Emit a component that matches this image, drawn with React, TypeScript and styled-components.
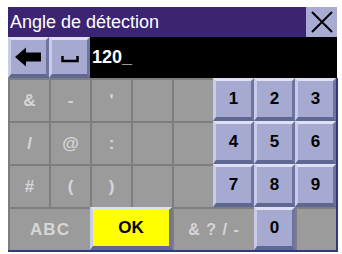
import React from "react";
import styled, { createGlobalStyle, css } from "styled-components";

const GlobalStyle = createGlobalStyle`
  html, body {
    margin: 0;
    padding: 0;
    background: #ffffff;
  }
  body {
    font-family: "Liberation Sans", Arial, sans-serif;
  }
`;

const Frame = styled.div`
  width: 330px;
  margin: 7px 0 0 8px;
  display: flex;
  flex-direction: column;
`;

const TitleBar = styled.div`
  display: flex;
  align-items: center;
  height: 30px;
  background: #3b2471;
  width: 329px;
`;

const Title = styled.div`
  flex: 1;
  color: #ffffff;
  font-size: 18px;
  padding-left: 2px;
  padding-top: 1px;
`;

const CloseButton = styled.div`
  width: 31px;
  height: 30px;
  background: #a9acd2;
  display: flex;
  align-items: center;
  justify-content: center;
`;

const bevel = css`
  box-sizing: border-box;
  border-style: solid;
  border-width: 3px 3px 4px 3px;
  border-color: #dfe1f3 #6c74a0 #5f6892 #c9cce8;
`;

const InputRow = styled.div`
  display: flex;
  height: 41px;
  width: 329px;
  background: #000000;
`;

const EditKey = styled.div`
  ${bevel};
  width: 41px;
  height: 41px;
  background: #a6aad0;
  display: flex;
  align-items: center;
  justify-content: center;
`;

const Field = styled.div`
  flex: 1;
  display: flex;
  align-items: center;
  padding-left: 2px;
  color: #ffffff;
  font-weight: bold;
  font-size: 18px;
`;

const Keypad = styled.div`
  display: grid;
  grid-template-columns: repeat(8, 41px);
  grid-template-rows: repeat(4, 43px);
  width: 330px;
  box-sizing: border-box;
  border-right: 2px solid #2e3b7e;
  border-bottom: 2px solid #2e3b7e;
  background: #9c9b9c;
`;

const GrayCell = styled.div<{ $span?: number; $size?: number }>`
  grid-column: span ${(p) => p.$span ?? 1};
  box-sizing: border-box;
  border-top: 2px solid #7e7e80;
  border-left: 2px solid #7e7e80;
  background: #9c9b9c;
  color: #d6d6d6;
  font-weight: bold;
  font-size: ${(p) => p.$size ?? 17}px;
  letter-spacing: ${(p) => ((p.$span ?? 1) > 1 ? 1 : 0)}px;
  display: flex;
  align-items: center;
  justify-content: center;
`;

const NumKey = styled.div<{ $yellow?: boolean; $span?: number }>`
  ${bevel};
  grid-column: span ${(p) => p.$span ?? 1};
  background: ${(p) => (p.$yellow ? "#ffff00" : "#a6aad0")};
  color: #000000;
  font-weight: bold;
  font-size: 17px;
  display: flex;
  align-items: center;
  justify-content: center;
`;

const symbols = [
  ["&", "-", "'", ""],
  ["/", "@", ":", ""],
  ["#", "(", ")", ""],
];
const digits = [
  ["1", "2", "3"],
  ["4", "5", "6"],
  ["7", "8", "9"],
];

const App: React.FC = () => {
  return (
    <>
      <GlobalStyle />
      <Frame>
        <TitleBar>
          <Title>Angle de détection</Title>
          <CloseButton>
            <svg width="24" height="24" viewBox="0 0 24 24">
              <path d="M2 2 L22 22 M22 2 L2 22" stroke="#000" strokeWidth="2" />
            </svg>
          </CloseButton>
        </TitleBar>
        <InputRow>
          <EditKey>
            <svg width="27" height="20" viewBox="0 0 27 20">
              <path d="M0 10 L11 0.5 L11 5.5 L26 5.5 L26 14.5 L11 14.5 L11 19.5 Z" fill="#000" />
            </svg>
          </EditKey>
          <EditKey>
            <svg width="18" height="12" viewBox="0 0 18 12">
              <path d="M1.5 5 L1.5 10 L16.5 10 L16.5 5" stroke="#000" strokeWidth="2.5" fill="none" />
            </svg>
          </EditKey>
          <Field>120_</Field>
        </InputRow>
        <Keypad>
          {symbols.map((row, r) => (
            <React.Fragment key={r}>
              {row.map((s, i) => (
                <GrayCell key={i}>{s}</GrayCell>
              ))}
              <GrayCell />
              {digits[r].map((d) => (
                <NumKey key={d}>{d}</NumKey>
              ))}
            </React.Fragment>
          ))}
          <GrayCell $span={2} $size={17}>
            ABC
          </GrayCell>
          <NumKey $yellow $span={2}>
            OK
          </NumKey>
          <GrayCell $span={2} $size={16}>
            &amp; ? / -
          </GrayCell>
          <NumKey>0</NumKey>
          <GrayCell />
        </Keypad>
      </Frame>
    </>
  );
};

export default App;
